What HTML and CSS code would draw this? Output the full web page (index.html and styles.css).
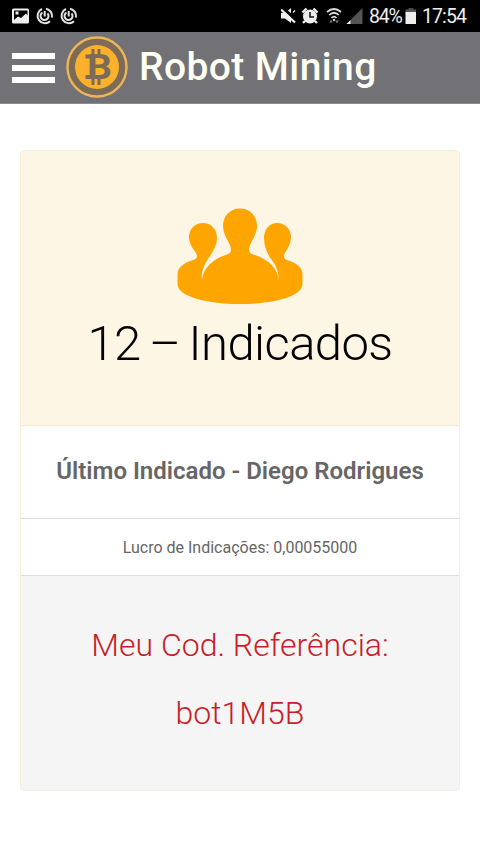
FILE: index.html
```html
<!DOCTYPE html>
<html lang="pt-br">

<head>
    <meta charset="utf-8">
    <meta name="viewport" content="width=device-width,initial-scale=1">
    <title>Robot Mining</title>
    <link rel="stylesheet" href="styles.css">
</head>

<body>
    <div class="statusbar">
        <svg class="status-left" width="80" height="32" viewBox="0 0 80 32">
            <path fill="#eee" fill-rule="evenodd" d="M13.500 8.500h14q1.500 0 1.500 1.500v12q0 1.500-1.500 1.500h-14q-1.500 0-1.500-1.500v-12q0-1.500 1.500-1.500zM14 20l4-3.500 3 1.500 5-4.500 1.500 2v-5h-13.500zM15.500 11.500h3v3h-3z" />
            <g id="swirl" fill="none" stroke="#e4e4e4" stroke-width="2">
                <path d="M42 9A7.400 7.400 0 1 0 50 21.200M46 8.700A7.400 7.400 0 0 1 51.900 17.500" />
                <path d="M42.500 12.500A4 4 0 1 0 47.500 13.300M44.700 11v5.500" />
            </g>
            <use href="#swirl" x="24" />
        </svg>
        <div class="status-right">
            <svg width="88" height="32" viewBox="0 0 88 32">
                <path fill="#eee" d="M0 13h4l6-5v15l-6-4.500H0z" />
                <path stroke="#000" stroke-width="3" d="M1 7.500l15 13" />
                <path stroke="#eee" stroke-width="2.200" d="M0 9.500l14 13" />
                <path stroke="#eee" stroke-width="1.300" d="M12 12.500l2-2" />
                <circle cx="29" cy="16.500" r="7" fill="#eee" />
                <path fill="none" stroke="#eee" stroke-width="2.400" d="M21.500 12.500l4-4M36.500 12.500l-4-4M24 21l-2 2M34 21l2 2" />
                <path fill="none" stroke="#111" stroke-width="1.500" d="M29 12v5h4" />
                <g fill="none" stroke="#ddd" stroke-width="1.700">
                    <path d="M46 12q7-6 14 0M48.200 15q4.800-4.500 9.600 0M50.500 18q2.500-2.600 5 0" />
                </g>
                <circle cx="53" cy="20" r="1.200" fill="#ddd" />
                <path fill="#777" d="M50 19.500l1.800 3h-3.600zM56 23.500l1.800-3h-3.600z" />
                <path fill="#555" d="M81.500 8v16h-16z" />
                <path fill="#eee" d="M69.500 20v4h-4z" />
            </svg>
            <span class="percent">84%</span>
            <svg width="12" height="32" viewBox="0 0 12 32">
                <path fill="#444" d="M3.500 8h5v2h-5z" />
                <path fill="#555" d="M.5 9.500h10.500v4H.5z" />
                <path fill="#eee" d="M.5 12h10.500v12H.5z" />
            </svg>
            <span class="clock">17:54</span>
        </div>
    </div>

    <div class="header">
        <div class="menu">
            <span></span>
            <span></span>
            <span></span>
        </div>
        <svg class="logo" width="62" height="62" viewBox="0 0 62 62">
            <circle cx="31" cy="31" r="29.500" fill="#7c6c57" stroke="#edb558" stroke-width="2.400" />
            <circle cx="31" cy="31" r="22" fill="#fbb12b" />
            <path fill="#7c6c57" d="M25.500 13h3v8h-3zM31.500 13h3v8h-3zM25.500 41h3v8h-3zM31.500 41h3v8h-3z" />
            <path fill="#7c6c57" d="M19.500 18.500h6v4h-6zM19.500 39h6v4h-6z" />
            <text class="coin" x="21" y="43" textLength="25" lengthAdjust="spacingAndGlyphs">B</text>
        </svg>
        <h1>Robot Mining</h1>
    </div>

    <div class="panel">
        <div class="panel-heading">
            <svg width="126" height="97" viewBox="0 0 126 97">
                <path fill="orange" d="M63 .5C73 .5 80 8 80 18C80 28 72 35 72 42Q72 45 76 46.500C92 51 101 61 101.500 72C102 64 99 57 94 51C90 45 87 38 87 30C87 21 93 15 100 15C108 15 114 21 114 29C114 39 107 44 107 48Q107 51 110 52C120 55 125.500 60 125.500 66V76C125.500 88 98 96 63 96S.5 88 .5 76V66C.5 60 6 55 16 52Q20 51 20 48C20 44 12 39 12 29C12 21 18 15 26 15C34 15 40 21 40 30C40 38 35 45 31 51C27 57 24 64 25 72C26 61 35 51 50 46.500Q54 45 54 42C54 35 46 28 46 18C46 8 53 .5 63 .5Z" />
            </svg>
            <h2>12 – Indicados</h2>
        </div>
        <div class="panel-last">Último Indicado - Diego Rodrigues</div>
        <div class="panel-profit">Lucro de Indicações: 0,00055000</div>
        <div class="panel-footer">
            <p>Meu Cod. Referência:</p>
            <p>bot1M5B</p>
        </div>
    </div>
</body>

</html>
```
FILE: styles.css
```css
* {
    margin: 0px;
    padding: 0px;
    box-sizing: border-box;
}

body {
    font-family: Roboto, sans-serif;
    background: #fff;
    color: #666;
}

svg {
    display: block;
    flex: none;
}

.statusbar {
    height: 32px;
    background: #000;
    color: #eee;
    display: flex;
    justify-content: space-between;
}

.status-right {
    display: flex;
    width: 199px;
    line-height: 33px;
    font-size: 19.5px;
    white-space: nowrap;
}

.percent {
    width: 36px;
    font-size: 19.5px;
    letter-spacing: -1.2px;
}

.clock {
    margin-left: 5px;
    letter-spacing: -0.9px;
}

.header {
    height: 72px;
    background: #727176;
    border-bottom: 1px solid #8b8a8e;
    display: flex;
    align-items: center;
    padding-left: 12px;
}

.menu {
    width: 43px;
    display: grid;
    gap: 6px;
}

.menu span {
    height: 6px;
    background: #fff;
}

.logo {
    margin-left: 11px;
    margin-bottom: 1px;
}

.coin {
    font-family: Roboto, sans-serif;
    font-weight: bold;
    font-size: 34.5px;
    fill: #7c6c57;
}

.header h1 {
    margin-left: 11px;
    font-size: 39px;
    font-weight: 500;
    letter-spacing: 0.4px;
    line-height: 68px;
    padding-bottom: 2px;
    color: #fffff4;
    white-space: nowrap;
}

.panel {
    width: 440px;
    height: 641px;
    margin: 46px auto 0;
    border: 1px solid #f6eed8;
    border-radius: 4px;
    overflow: hidden;
    text-align: center;
    white-space: nowrap;
}

.panel-heading {
    height: 275px;
    padding-top: 57px;
    background: #fdf6e4;
    border-bottom: 1px solid #f0ead6;
}

.panel-heading svg {
    margin: 0 auto;
}

.panel-heading h2 {
    margin-top: 10px;
    font-size: 49px;
    font-weight: 300;
    letter-spacing: -0.6px;
    word-spacing: -3px;
    line-height: 58px;
    color: #000;
}

.panel-last {
    height: 93px;
    line-height: 90px;
    font-size: 24px;
    font-weight: 600;
    border-bottom: 1px solid #ddd;
}

.panel-profit {
    height: 57px;
    line-height: 57px;
    font-size: 16px;
    border-bottom: 1px solid #ddd;
}

.panel-footer {
    height: 214px;
    padding-top: 35px;
    background: #f5f5f5;
    color: #c81e28;
    font-size: 32px;
    font-weight: 300;
    line-height: 68px;
}
```
